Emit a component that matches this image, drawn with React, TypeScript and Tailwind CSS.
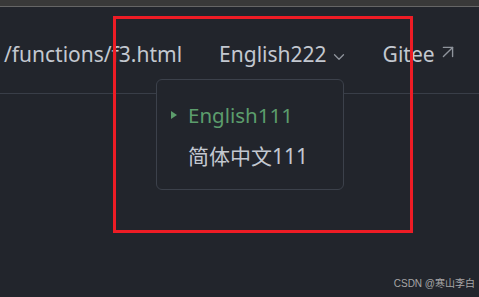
import { ChevronDown, ArrowUpRight } from 'lucide-react';

const font = { fontFamily: '"Noto Sans", "Noto Sans CJK SC", sans-serif' };

function LangMenu() {
  return (
    <div className="absolute left-[156px] top-[79px] w-[188px] h-[111px] rounded-[6px] border border-[#3c414b] bg-[#22252c] py-[14px]">
      <div className="flex items-center h-[42px] pl-[14px]">
        <svg width="6" height="8" viewBox="0 0 6 8" className="mr-[11px]">
          <path d="M0 0L6 4L0 8Z" fill="#5c9d6c" />
        </svg>
        <span className="text-[20.5px] text-[#5c9d6c]">English111</span>
      </div>
      <div className="flex items-center h-[42px] pl-[31px]">
        <span className="text-[21px] text-[#c3c8d0]">简体中文111</span>
      </div>
    </div>
  );
}

export default function App() {
  return (
    <div className="relative w-[479px] h-[297px] bg-[#22252c] overflow-hidden" style={font}>
      <div className="h-[7px] bg-[#393939] border-b border-[#666666]" />
      <header className="h-[87px] border-b border-[#393e48] flex items-center pt-[9px]">
        <nav className="flex items-center text-[21px] text-[#c3c8d0]">
          <span className="ml-[4px]">/functions/f3.html</span>
          <span className="ml-[37px] flex items-center">
            English222
            <ChevronDown className="w-[18px] h-[18px] ml-[3px] mt-[4px] text-[#8f949c]" strokeWidth={1.75} />
          </span>
          <span className="ml-[35px] flex items-center">
            Gitee
            <ArrowUpRight className="w-[22px] h-[22px] ml-[2px] -mt-[6px] text-[#8f949c]" strokeWidth={1.5} />
          </span>
        </nav>
      </header>

      <LangMenu />

      <div className="absolute left-[113px] top-[16px] w-[300px] h-[217px] border-[3px] border-[#ee1c25]" />

      <div className="absolute right-[4px] bottom-[6px] text-[10px] text-[#a6a6a6]" style={{ fontFamily: '"Liberation Sans", "Noto Sans CJK SC", sans-serif' }}>
        CSDN @寒山李白
      </div>
    </div>
  );
}
